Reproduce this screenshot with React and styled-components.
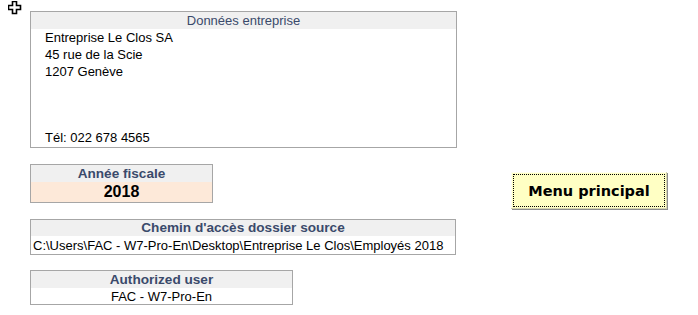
import React from "react";
import styled, { createGlobalStyle } from "styled-components";

const Global = createGlobalStyle`
  html, body { margin: 0; padding: 0; background: #ffffff; }
  body { font-family: "Liberation Sans", Arial, sans-serif; color: #000; }
`;

const Page = styled.div`
  position: relative;
  width: 698px;
  height: 315px;
  box-sizing: border-box;
  padding: 11px 0 0 30px;
  display: flex;
  flex-direction: column;
`;

const Cursor = styled.svg`
  position: absolute;
  left: 8px;
  top: 1px;
`;

const Panel = styled.div`
  box-sizing: border-box;
  width: ${(p) => p.$w}px;
  height: ${(p) => p.$h}px;
  border: 1px solid #a6a6a6;
  background: #ffffff;
  display: flex;
  flex-direction: column;
  margin-top: ${(p) => p.$mt || 0}px;
`;

const Header = styled.div`
  height: ${(p) => p.$h || 17}px;
  background: #f0f0f0;
  display: flex;
  align-items: center;
  justify-content: center;
  font-size: ${(p) => (p.$bold ? 13.6 : 13)}px;
  font-weight: ${(p) => (p.$bold ? 700 : 400)};
  color: #3a4a6b;
  line-height: 1;
`;

const Address = styled.div`
  flex: 1;
  display: flex;
  flex-direction: column;
  padding: 0 0 1px 14px;
  font-size: 13px;
`;

const Line = styled.div`
  height: 17px;
  line-height: 17px;
`;

const Spacer = styled.div`
  flex: 1;
`;

const Value = styled.div`
  flex: 1;
  display: flex;
  align-items: center;
  justify-content: ${(p) => p.$align || "center"};
  background: ${(p) => p.$bg || "#ffffff"};
  font-size: ${(p) => p.$size || 13}px;
  font-weight: ${(p) => (p.$bold ? 700 : 400)};
  padding-left: ${(p) => p.$pl || 0}px;
  line-height: 1;
`;

const Row = styled.div`
  display: flex;
  align-items: flex-start;
  height: 39px;
  margin-top: 16px;
`;

const MenuButton = styled.button`
  box-sizing: border-box;
  flex: none;
  margin: 8px 0 0 298px;
  width: 156px;
  height: 37px;
  padding: 2px;
  border: none;
  background: #ffffc4;
  box-shadow: 1px 1px 0 #8c8c8c, inset -1px -1px 0 #d4d4b0, inset 1px 1px 0 #fffff0;
  font-family: "DejaVu Sans", Tahoma, sans-serif;
  font-weight: 700;
  font-size: 14.5px;
  color: #000;
  cursor: pointer;
`;

const Dotted = styled.span`
  display: flex;
  align-items: center;
  justify-content: center;
  width: 100%;
  height: 100%;
  box-sizing: border-box;
  border: 1px dotted #000;
`;

export default function App() {
  return (
    <>
      <Global />
      <Page>
        <Cursor width="14" height="14" viewBox="0 0 14 14">
          <path
            d="M4.5 0.5 H8.5 V4.5 H12.5 V8.5 H8.5 V12.5 H4.5 V8.5 H0.5 V4.5 H4.5 Z"
            fill="#fff"
            stroke="#000"
            strokeWidth="1.6"
          />
        </Cursor>
        <Panel $w={427} $h={137}>
          <Header $h={17}>Données entreprise</Header>
          <Address>
            <Line>Entreprise Le Clos SA</Line>
            <Line>45 rue de la Scie</Line>
            <Line>1207 Genève</Line>
            <Spacer />
            <Line>Tél: 022 678 4565</Line>
          </Address>
        </Panel>
        <Row>
          <Panel $w={183} $h={39}>
            <Header $bold $h={17}>Année fiscale</Header>
            <Value $bg="#fde9d9" $bold $size={16}>2018</Value>
          </Panel>
          <MenuButton>
            <Dotted>Menu principal</Dotted>
          </MenuButton>
        </Row>
        <Panel $w={426} $h={36} $mt={16}>
          <Header $bold $h={16}>Chemin d'accès dossier source</Header>
          <Value $align="flex-start" $pl={2}>
            C:\Users\FAC - W7-Pro-En\Desktop\Entreprise Le Clos\Employés 2018
          </Value>
        </Panel>
        <Panel $w={263} $h={35} $mt={15}>
          <Header $bold $h={17}>Authorized user</Header>
          <Value>FAC - W7-Pro-En</Value>
        </Panel>
      </Page>
    </>
  );
}
